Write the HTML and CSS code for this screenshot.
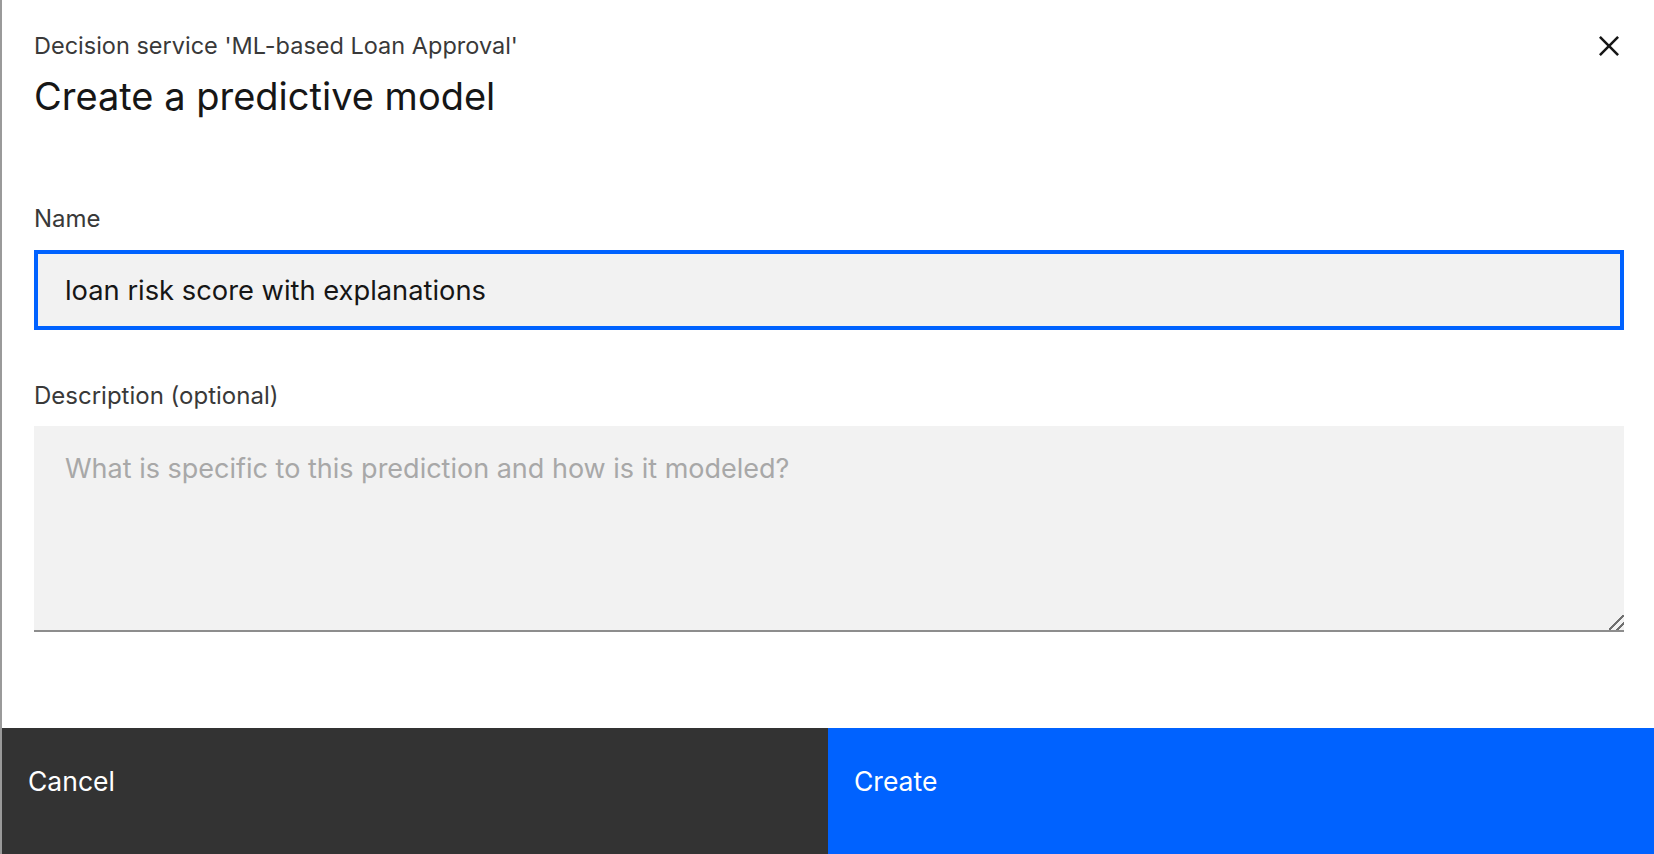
FILE: index.html
```html
<!DOCTYPE html>
<html lang="en">
<head>
<meta charset="utf-8">
<title>Create a predictive model</title>
<link rel="stylesheet" href="styles.css">
</head>
<body>
<div class="page">
  <div class="edge"></div>
  <div class="modal">
    <header class="modal-header">
      <div class="titles">
        <p class="modal-label">Decision service 'ML-based Loan Approval'</p>
        <h2 class="modal-heading">Create a predictive model</h2>
      </div>
      <button class="close" type="button" aria-label="Close">
        <svg width="40" height="40" viewBox="0 0 20 20" aria-hidden="true">
          <path d="M15 5.9L14.1 5 10 9.1 5.9 5 5 5.9 9.1 10 5 14.1 5.9 15 10 10.9 14.1 15 15 14.1 10.9 10z" fill="#161616"/>
        </svg>
      </button>
    </header>
    <div class="modal-body">
      <div class="field">
        <label class="field-label" for="name">Name</label>
        <input class="text-input" id="name" type="text" value="loan risk score with explanations">
      </div>
      <div class="field field-desc">
        <label class="field-label" for="desc">Description (optional)</label>
        <textarea class="text-area" id="desc" placeholder="What is specific to this prediction and how is it modeled?"></textarea>
      </div>
    </div>
    <footer class="modal-footer">
      <button class="btn btn-secondary" type="button">Cancel</button>
      <button class="btn btn-primary" type="button">Create</button>
    </footer>
  </div>
</div>
</body>
</html>
```
FILE: styles.css
```css
html, body {
  margin: 0;
  padding: 0;
  height: 100%;
  overflow: hidden;
  background: #ffffff;
}

body {
  font-family: "Inter", "Noto Sans", sans-serif;
  color: #161616;
}

.page {
  display: flex;
  height: 854px;
}

.edge {
  width: 2px;
  flex: 0 0 2px;
  background: #9a9a9a;
}

.modal {
  flex: 1;
  display: flex;
  flex-direction: column;
  background: #ffffff;
}

.modal-header {
  display: flex;
  justify-content: space-between;
  align-items: flex-start;
  padding: 30px 25px 0 32px;
}

.modal-label {
  margin: 0;
  font-size: 23.5px;
  line-height: 32px;
  color: #393939;
}

.modal-heading {
  margin: 10px 0 0;
  font-size: 38px;
  line-height: 48px;
  font-weight: 400;
  color: #161616;
}

.close {
  margin-top: -4px;
  padding: 0;
  border: 0;
  background: transparent;
  width: 40px;
  height: 40px;
  display: flex;
}

.modal-body {
  display: flex;
  flex-direction: column;
  padding: 83px 30px 0 32px;
}

.field {
  display: flex;
  flex-direction: column;
}

.field-desc {
  margin-top: 50px;
}

.field-label {
  font-size: 24px;
  line-height: 32px;
  color: #393939;
  margin-bottom: 15px;
}

.field-desc .field-label {
  margin-bottom: 14px;
}

.text-input {
  box-sizing: border-box;
  height: 80px;
  border: 4px solid #0062ff;
  background: #f2f2f2;
  padding: 0 27px;
  font-family: inherit;
  font-size: 27.3px;
  color: #161616;
  outline: none;
}

.text-area {
  box-sizing: border-box;
  height: 206px;
  border: 0;
  border-bottom: 2px solid #8d8d8d;
  background: #f2f2f2;
  padding: 23px 31px 20px;
  font-family: inherit;
  font-size: 27px;
  line-height: 40px;
  color: #161616;
  outline: none;
}

.text-area::placeholder {
  color: #a8a8a8;
}

.text-area::-webkit-resizer {
  background: linear-gradient(135deg,
    transparent 0 44%, #6f6f6f 44% 56%, transparent 56% 70%,
    #6f6f6f 70% 82%, transparent 82% 100%);
}

.modal-footer {
  margin-top: auto;
  display: flex;
  height: 126px;
}

.btn {
  flex: 1;
  border: 0;
  margin: 0;
  text-align: left;
  padding: 35px 26px 0;
  font-family: inherit;
  font-size: 26.5px;
  line-height: 36px;
  color: #ffffff;
  display: flex;
  align-items: flex-start;
}

.btn-secondary {
  background: #333333;
}

.btn-primary {
  background: #0062ff;
}
```
